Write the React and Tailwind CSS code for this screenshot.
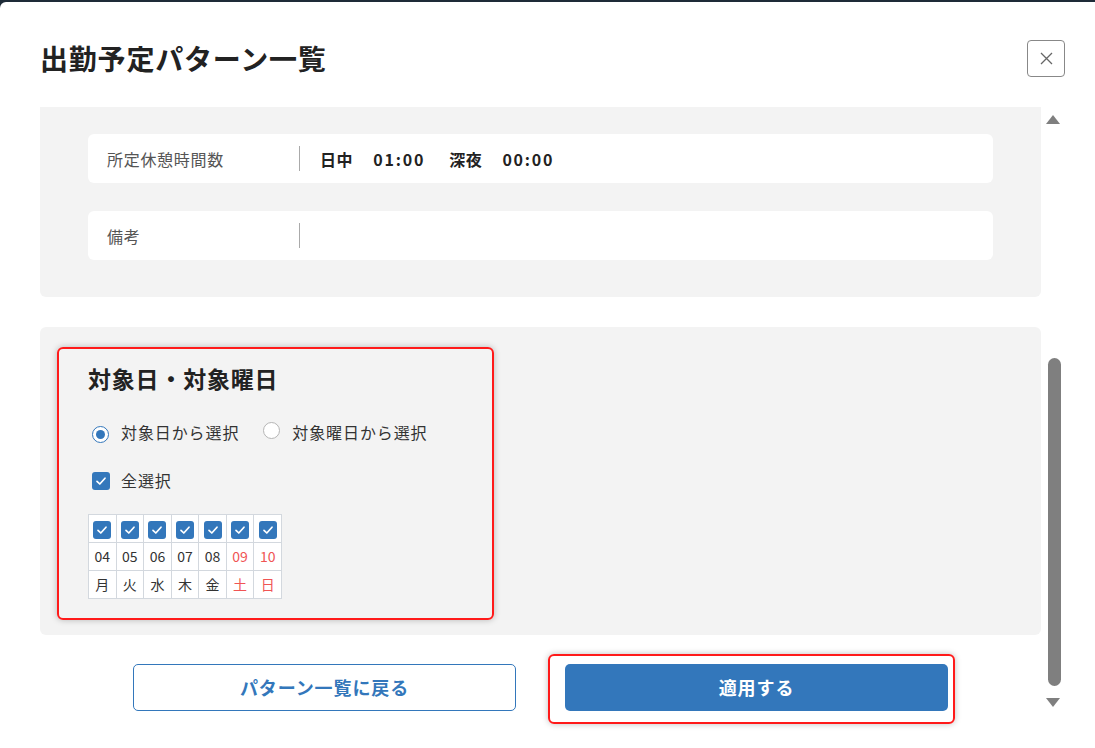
import React from 'react';

const FONT = { fontFamily: '"Noto Sans CJK JP", "Noto Sans", sans-serif' };

function CheckBox({ size = 18 }) {
  return (
    <span className="inline-flex items-center justify-center rounded-[3px] bg-[#3377bb] shrink-0"
      style={{ width: size, height: size }}>
      <svg width={size - 6} height={size - 6} viewBox="0 0 12 12" fill="none">
        <path d="M2 6.3 L4.8 9 L10 3.2" stroke="#fff" strokeWidth="1.7" strokeLinecap="round" strokeLinejoin="round" />
      </svg>
    </span>
  );
}

function Radio({ checked }) {
  return (
    <span className={`inline-flex items-center justify-center w-[17px] h-[17px] rounded-full bg-white border ${checked ? 'border-[#3377bb]' : 'border-[#b5b5b5]'}`}>
      {checked && <span className="w-[9px] h-[9px] rounded-full bg-[#3377bb]" />}
    </span>
  );
}

const days = [
  { d: '04', w: '月' }, { d: '05', w: '火' }, { d: '06', w: '水' }, { d: '07', w: '木' },
  { d: '08', w: '金' }, { d: '09', w: '土', red: true }, { d: '10', w: '日', red: true },
];

function InfoRow({ label, children }) {
  return (
    <div className="flex items-center h-[49px] bg-white rounded-[6px]">
      <div className="w-[211px] pl-[19px] text-[16px] text-[#555] tracking-[0.7px]">{label}</div>
      <div className="w-px h-[25px] bg-[#aaa]" />
      <div className="pl-[20px] text-[16px] font-bold text-[#222] tracking-[0.6px] flex items-center">{children}</div>
    </div>
  );
}

export default function App() {
  return (
    <div className="w-[1095px] h-[748px] bg-[#1e2b38] pt-[2px] overflow-hidden" style={FONT}>
      <div className="h-[746px] bg-white rounded-tl-[6px] flex flex-col pl-[40px] pr-[30px]">
        {/* Header */}
        <div className="flex items-center justify-between pt-[38px] pb-[30px]">
          <h1 className="text-[28px] leading-[37px] font-bold text-[#222] tracking-[0.8px]">出勤予定パターン一覧</h1>
          <button className="w-[38px] h-[37px] border border-[#888] rounded-[4px] flex items-center justify-center bg-white">
            <svg width="13" height="13" viewBox="0 0 13 13">
              <path d="M1 1 L12 12 M12 1 L1 12" stroke="#666" strokeWidth="1.3" />
            </svg>
          </button>
        </div>

        {/* Scroll area */}
        <div className="flex flex-1 min-h-0">
          <div className="flex-1 overflow-hidden flex flex-col">
            <div className="bg-[#f3f3f3] rounded-b-[6px] px-[48px] pt-[27px] pb-[37px] flex flex-col gap-[28px] shrink-0">
              <InfoRow label="所定休憩時間数">
                <span>日中</span>
                <span className="ml-[20px] tracking-[1.8px]">01:00</span>
                <span className="ml-[24px]">深夜</span>
                <span className="ml-[20px] tracking-[1.8px]">00:00</span>
              </InfoRow>
              <InfoRow label="備考" />
            </div>

            <div className="mt-[30px] bg-[#f3f3f3] rounded-[6px] h-[308px] pt-[20px] pl-[17px] shrink-0">
              <div className="w-[437px] h-[273px] border-2 border-[#ff1a1a] rounded-[6px] shadow-[0_0_6px_rgba(0,0,0,0.25)] pl-[29px] pt-[14px]">
                <h2 className="text-[23px] leading-[30px] font-bold text-[#222] tracking-[0.8px]">対象日・対象曜日</h2>
                <div className="mt-[27px] h-[24px] flex items-center text-[16px] text-[#333] tracking-[0.9px]">
                  <span className="ml-[4px]"><Radio checked /></span>
                  <span className="ml-[12px]">対象日から選択</span>
                  <span className="ml-[24px]"><Radio /></span>
                  <span className="ml-[12px]">対象曜日から選択</span>
                </div>
                <div className="mt-[24px] h-[24px] flex items-center text-[16px] text-[#333] tracking-[0.9px]">
                  <span className="ml-[4px]"><CheckBox /></span>
                  <span className="ml-[11px]">全選択</span>
                </div>
                <table className="mt-[22px] border-collapse w-[194px] bg-white text-[14px] text-[#333]">
                  <tbody>
                    <tr>
                      {days.map(x => (
                        <td key={x.d} className="border border-[#d3d8de] h-[28px] text-center align-middle p-0">
                          <span className="inline-flex align-middle"><CheckBox /></span>
                        </td>
                      ))}
                    </tr>
                    <tr>
                      {days.map(x => (
                        <td key={x.d} className={`border border-[#d3d8de] h-[28px] text-center p-0 ${x.red ? 'text-[#f05454]' : ''}`}>{x.d}</td>
                      ))}
                    </tr>
                    <tr>
                      {days.map(x => (
                        <td key={x.d} className={`border border-[#d3d8de] h-[28px] text-center p-0 ${x.red ? 'text-[#f05454]' : ''}`}>{x.w}</td>
                      ))}
                    </tr>
                  </tbody>
                </table>
              </div>
            </div>

            <div className="mt-[29px] flex justify-center gap-[49px] shrink-0">
              <button className="w-[383px] h-[47px] rounded-[5px] border border-[#3377bb] bg-white text-[#3377bb] text-[18px] font-bold tracking-[0.9px]">
                パターン一覧に戻る
              </button>
              <div className="relative">
                <button className="w-[383px] h-[47px] rounded-[5px] bg-[#3377bb] text-white text-[18px] font-bold tracking-[0.9px]">
                  適用する
                </button>
                <div className="absolute left-[-17px] top-[-10px] w-[407px] h-[70px] border-2 border-[#ff1a1a] rounded-[6px] shadow-[0_0_6px_rgba(0,0,0,0.25)] pointer-events-none" />
              </div>
            </div>
          </div>

          {/* Scrollbar */}
          <div className="w-[24px] flex flex-col items-center pt-[8px]">
            <svg width="14" height="9" viewBox="0 0 14 9"><path d="M7 0 L14 9 L0 9 Z" fill="#7f7f7f" /></svg>
            <div className="mt-[234px] w-[13px] h-[328px] rounded-full bg-[#7f7f7f] ml-[2px]" />
            <svg className="mt-[12px]" width="14" height="9" viewBox="0 0 14 9"><path d="M0 0 L14 0 L7 9 Z" fill="#7f7f7f" /></svg>
          </div>
        </div>
      </div>
    </div>
  );
}
